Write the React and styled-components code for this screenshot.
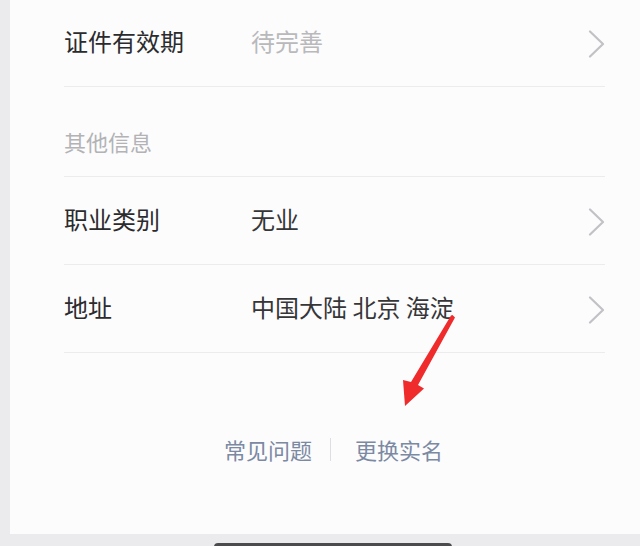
import React from "react";
import styled, { createGlobalStyle } from "styled-components";

const Global = createGlobalStyle`
  html, body { margin: 0; padding: 0; }
  body {
    background: #ebebed;
    font-family: "Noto Sans CJK SC", "Noto Sans", sans-serif;
    overflow: hidden;
  }
`;

const Page = styled.div`
  width: 640px;
  height: 546px;
  display: flex;
  flex-direction: column;
  background: #ebebed;
  overflow: hidden;
`;

const Card = styled.div`
  position: relative;
  flex-shrink: 0;
  margin-left: 10px;
  height: 534px;
  background: #fcfcfd;
  padding: 0 35px 0 54px;
  box-sizing: border-box;
  overflow: hidden;
`;

const List = styled.div`
  margin-top: -1px;
  display: flex;
  flex-direction: column;
`;

const Row = styled.div`
  height: 88px;
  box-sizing: border-box;
  border-bottom: 1px solid #ececee;
  padding-bottom: 3px;
  display: flex;
  align-items: center;
`;

const SectionHeader = styled.div`
  height: 90px;
  box-sizing: border-box;
  border-bottom: 1px solid #ececee;
  display: flex;
  align-items: flex-end;
  padding-bottom: 20px;
  font-size: 22px;
  line-height: 30px;
  color: #b3b3b6;
`;

const Label = styled.div`
  width: 187px;
  font-size: 24px;
  line-height: 30px;
  color: #2b2b2d;
`;

const Value = styled.div`
  flex: 1;
  font-size: 24px;
  line-height: 30px;
  color: ${(p) => (p.$placeholder ? "#b9b9bc" : "#363638")};
  white-space: pre;
`;

const Chevron = styled.svg`
  width: 17px;
  height: 28px;
  margin-top: 6px;
  flex-shrink: 0;
`;

const Footer = styled.div`
  margin-top: 81px;
  display: flex;
  justify-content: center;
  align-items: center;
  padding-right: 2px;
`;

const FooterLink = styled.span`
  font-size: 22px;
  line-height: 30px;
  color: #7b89a3;
`;

const Divider = styled.span`
  width: 1px;
  height: 23px;
  background: #dedee2;
  margin: 0 24px 0 18px;
`;

const Annotation = styled.svg`
  position: absolute;
  left: -10px;
  top: 0;
  width: 640px;
  height: 534px;
  pointer-events: none;
`;

const BottomStrip = styled.div`
  flex: 1;
  display: flex;
  justify-content: center;
  padding-left: 26px;
  padding-top: 9px;
`;

const HomeBar = styled.div`
  flex-shrink: 0;
  width: 238px;
  height: 8px;
  border-radius: 4px;
  background: #4b4b4d;
`;

const ChevronIcon = () => (
  <Chevron viewBox="0 0 17 28">
    <polyline
      points="2,1.5 15,14 2,26.5"
      fill="none"
      stroke="#c2c2c6"
      strokeWidth="2.2"
      strokeLinecap="round"
      strokeLinejoin="round"
    />
  </Chevron>
);

const rows = [
  { label: "职业类别", value: "无业" },
  { label: "地址", value: "中国大陆 北京 海淀" },
];

export default function App() {
  return (
    <Page>
      <Global />
      <Card>
        <List>
          <Row>
            <Label>证件有效期</Label>
            <Value $placeholder>待完善</Value>
            <ChevronIcon />
          </Row>
          <SectionHeader>其他信息</SectionHeader>
          {rows.map((r) => (
            <Row key={r.label}>
              <Label>{r.label}</Label>
              <Value>{r.value}</Value>
              <ChevronIcon />
            </Row>
          ))}
        </List>
        <Footer>
          <FooterLink>常见问题</FooterLink>
          <Divider />
          <FooterLink>更换实名</FooterLink>
        </Footer>
        <Annotation viewBox="0 0 640 534">
          <polygon
            points="452.5,315 455,317.5 418,385 424,388.5 405,406 403,380 411,382 451,315.5"
            fill="#ef2b2b"
          />
        </Annotation>
      </Card>
      <BottomStrip>
        <HomeBar />
      </BottomStrip>
    </Page>
  );
}
